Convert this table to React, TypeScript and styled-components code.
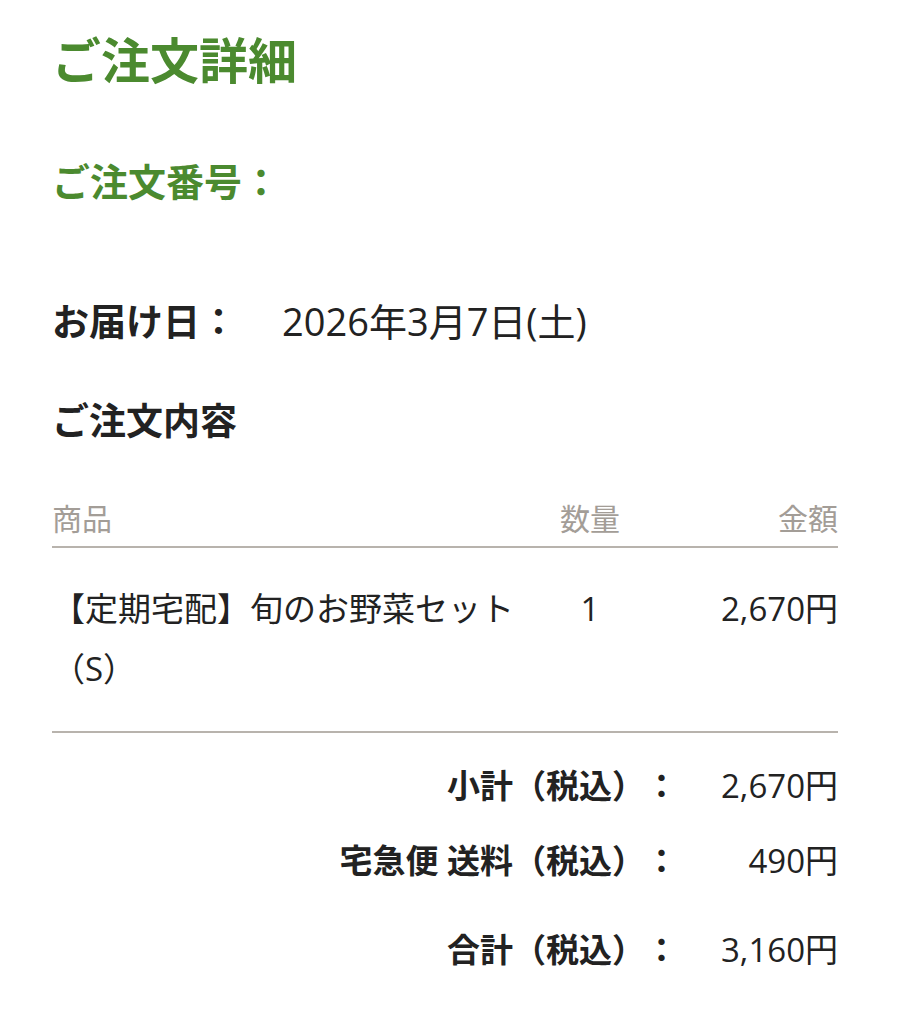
import React from 'react';
import styled, { createGlobalStyle } from 'styled-components';

type Item = {
  name: string;
  qty: number;
  price: number;
};

type Fee = {
  label: string;
  amount: number;
  spaced?: boolean;
};

const GlobalStyle = createGlobalStyle`
  html, body {
    margin: 0;
    padding: 0;
    background: #fff;
  }
  body {
    font-family: "Open Sans", "Noto Sans CJK JP", sans-serif;
    color: #222;
    text-spacing-trim: space-all;
  }
`;

const Page = styled.div`
  padding: 29px 61px 40px 52px;
`;

const Title = styled.h1`
  margin: 0;
  font-size: 49px;
  line-height: 62px;
  font-weight: 700;
  color: #4b8a2f;
`;

const OrderNo = styled.h2`
  margin: 66px 0 0;
  font-size: 38px;
  line-height: 48px;
  font-weight: 700;
  color: #4b8a2f;
`;

const DeliveryRow = styled.div`
  display: flex;
  align-items: baseline;
  margin-top: 93px;
  font-size: 37px;
  line-height: 47px;
`;

const DeliveryLabel = styled.span`
  font-weight: 700;
  width: 230px;
`;

const DeliveryDate = styled.span`
  font-weight: 400;
  font-size: 38px;
`;

const SectionTitle = styled.h3`
  margin: 52px 0 0;
  font-size: 37px;
  line-height: 47px;
  font-weight: 700;
`;

const Table = styled.div`
  margin-top: 55px;
`;

const Row = styled.div<{ $head?: boolean }>`
  display: grid;
  grid-template-columns: 1fr 136px 180px;
  border-bottom: 2px solid #b8b3ad;
  padding: ${(p) => (p.$head ? '0 0 8px' : '31px 0 32px')};
  font-size: ${(p) => (p.$head ? '30px' : '33px')};
  line-height: ${(p) => (p.$head ? '39px' : '60px')};
  color: ${(p) => (p.$head ? '#a39d97' : '#222')};
`;

const Cell = styled.div<{ $align?: 'left' | 'center' | 'right' }>`
  text-align: ${(p) => p.$align ?? 'left'};
`;

const Summary = styled.div`
  display: grid;
  grid-template-columns: 1fr 160px;
  margin-top: 30px;
  font-size: 33px;
  line-height: 45px;
`;

const FeeLabel = styled.div<{ $gap: number }>`
  text-align: right;
  font-weight: 700;
  margin-top: ${(p) => p.$gap}px;
`;

const FeeValue = styled.div<{ $gap: number }>`
  text-align: right;
  margin-top: ${(p) => p.$gap}px;
`;

const items: Item[] = [{ name: '【定期宅配】旬のお野菜セット（S）', qty: 1, price: 2670 }];

const fees: Fee[] = [
  { label: '小計（税込）：', amount: 2670 },
  { label: '宅急便 送料（税込）：', amount: 490 },
  { label: '合計（税込）：', amount: 3160, spaced: true },
];

const yen = (n: number) => `${n.toLocaleString('ja-JP')}円`;

export default function App() {
  return (
    <>
      <GlobalStyle />
      <Page>
        <Title>ご注文詳細</Title>
        <OrderNo>ご注文番号：</OrderNo>
        <DeliveryRow>
          <DeliveryLabel>お届け日：</DeliveryLabel>
          <DeliveryDate>2026年3月7日(土)</DeliveryDate>
        </DeliveryRow>
        <SectionTitle>ご注文内容</SectionTitle>
        <Table>
          <Row $head>
            <Cell>商品</Cell>
            <Cell $align="center">数量</Cell>
            <Cell $align="right">金額</Cell>
          </Row>
          {items.map((it) => (
            <Row key={it.name}>
              <Cell>{it.name}</Cell>
              <Cell $align="center">{it.qty}</Cell>
              <Cell $align="right">{yen(it.price)}</Cell>
            </Row>
          ))}
        </Table>
        <Summary>
          {fees.map((f, i) => (
            <React.Fragment key={f.label}>
              <FeeLabel $gap={i === 0 ? 0 : f.spaced ? 44 : 30}>{f.label}</FeeLabel>
              <FeeValue $gap={i === 0 ? 0 : f.spaced ? 44 : 30}>{yen(f.amount)}</FeeValue>
            </React.Fragment>
          ))}
        </Summary>
      </Page>
    </>
  );
}
